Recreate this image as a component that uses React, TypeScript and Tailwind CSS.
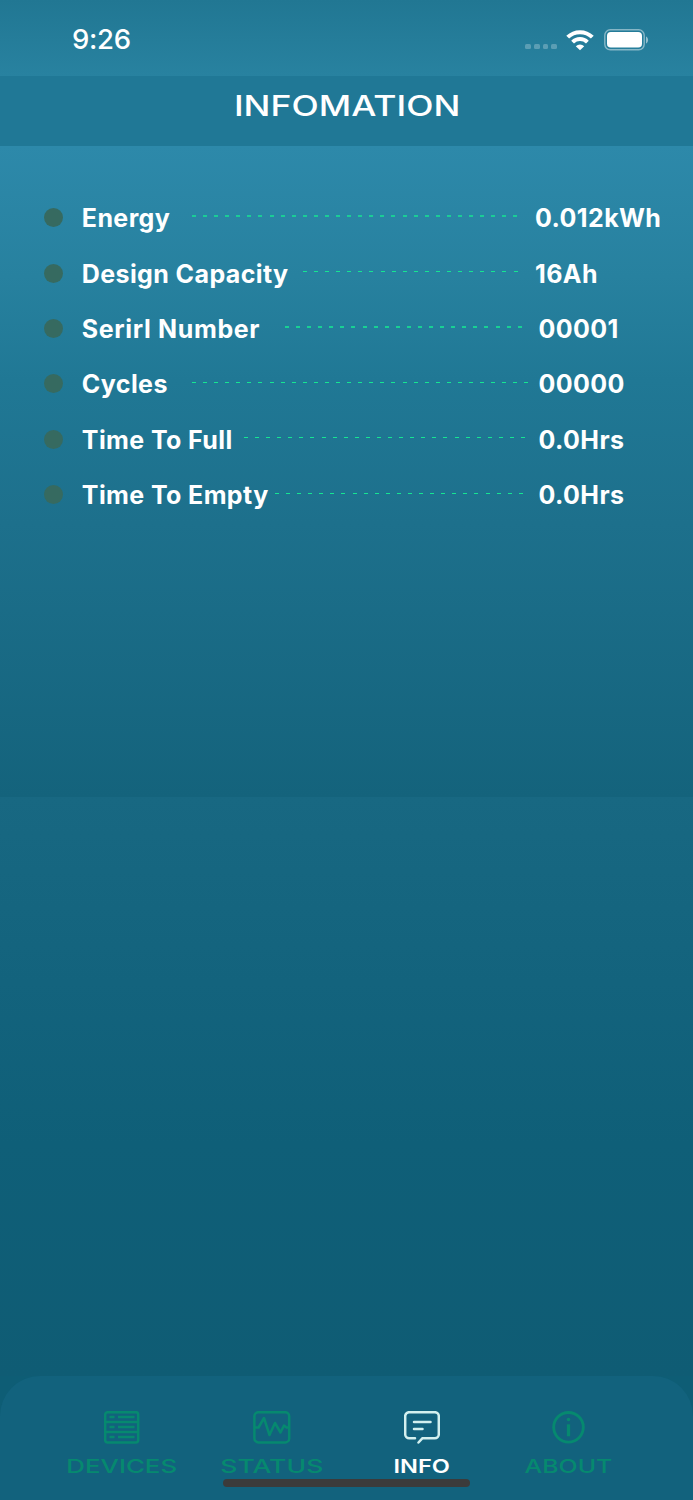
import clsx from 'clsx';
import React from 'react';

interface IRow {
    label: string;
    value: string;
    line: string;
    labelClass?: string;
    valueClass: string;
}

interface ITab {
    label: string;
    icon: React.ReactNode;
    active?: boolean;
    className: string;
    labelClass: string;
}

const ROWS: IRow[] = [
    {
        label: 'Energy',
        value: '0.012kWh',
        line: 'ml-[192px] w-[327px] h-[2px] opacity-75',
        valueClass: 'ml-[16px]',
    },
    {
        label: 'Design Capacity',
        value: '16Ah',
        line: 'ml-[303px] w-[216px] h-px',
        valueClass: 'ml-[16px]',
    },
    {
        label: 'Serirl Number',
        value: '00001',
        line: 'ml-[284.5px] w-[238px] h-[2px] opacity-80',
        labelClass: 'tracking-[0.65px]',
        valueClass: 'ml-[16px]',
    },
    {
        label: 'Cycles',
        value: '00000',
        line: 'ml-[192px] w-[338px] h-px',
        valueClass: 'ml-[8.5px]',
    },
    {
        label: 'Time To Full',
        value: '0.0Hrs',
        line: 'ml-[244px] w-[282px] h-px',
        valueClass: 'ml-[12.5px]',
    },
    {
        label: 'Time To Empty',
        value: '0.0Hrs',
        line: 'ml-[275px] w-[248px] h-px',
        valueClass: 'ml-[15.5px]',
    },
];

const TABS: ITab[] = [
    {
        label: 'DEVICES',
        className: 'w-[112px] ml-[66px]',
        labelClass: 'scale-x-[1.36]',
        icon: (
            <svg width="36" height="33" viewBox="0 0 36 33" fill="none">
                <rect x="1.2" y="1.2" width="33" height="30.2" rx="2.5" />
                <path d="M1 11h33M1 21h33M5.5 6h5M14 6h16.5M5.5 16h5M14 16h16.5M5.5 26h5M14 26h16.5" />
            </svg>
        ),
    },
    {
        label: 'STATUS',
        className: 'w-[104px] ml-[42px]',
        labelClass: 'scale-x-[1.4]',
        icon: (
            <svg width="38" height="33" viewBox="0 0 38 33" fill="none">
                <rect x="1.4" y="1.2" width="34.8" height="30.2" rx="4" />
                <path d="M2 16.5h3.5L11 7l5.5 17L22 12l5.5 9.5L31 14.5l2.5 2H36" />
            </svg>
        ),
    },
    {
        label: 'INFO',
        active: true,
        className: 'w-[60px] ml-[67.5px]',
        labelClass: 'scale-x-[1.24]',
        icon: (
            <svg width="36" height="33" viewBox="0 0 36 33" fill="none" strokeLinecap="round">
                <path d="M11 27.2H5.2a4 4 0 0 1-4-4V5.2a4 4 0 0 1 4-4h25.6a4 4 0 0 1 4 4v18a4 4 0 0 1-4 4H18.5l-4 4.3" />
                <path d="M10 11h16.5M10 18h8.5" />
            </svg>
        ),
    },
    {
        label: 'ABOUT',
        className: 'w-[88px] ml-[72.5px]',
        labelClass: 'scale-x-[1.31]',
        icon: (
            <svg width="33" height="33" viewBox="0 0 33 33" fill="none">
                <circle cx="16.5" cy="16.3" r="14.8" className="stroke-[2.9px]" />
                <path d="M16.5 13.3v12" className="stroke-[3.3px]" />
                <circle cx="16.5" cy="8.5" r="1.8" fill="currentColor" stroke="none" />
            </svg>
        ),
    },
];

const StatusBar = () => {
    return (
        <div className="h-[76px] bg-linear-to-b from-[#217793] to-[#2882a0] flex items-start justify-between pl-[72px] pr-[44px]">
            <span className="mt-[21px] text-[27.5px] leading-9 font-medium tracking-[-0.3px]">
                9:26
            </span>
            <div className="mt-[28px] flex items-center h-[24px]">
                <div className="flex gap-[3px] mr-[9px] mt-[13px]">
                    {[0, 1, 2, 3].map((dot) => (
                        <span
                            key={dot}
                            className="size-[5.7px] rounded-[1.5px] bg-white/25"
                        />
                    ))}
                </div>
                <svg width="28" height="21" viewBox="0 0 28 21" fill="none" stroke="white">
                    <path d="M1.7 7.2a17.5 17.5 0 0 1 24.6 0" strokeWidth="4" />
                    <path d="M6.6 12.1a10.6 10.6 0 0 1 14.8 0" strokeWidth="4" />
                    <path
                        d="M14 20.3l-4.2-4.1a6 6 0 0 1 8.4 0z"
                        fill="white"
                        stroke="none"
                    />
                </svg>
                <svg width="45" height="22" viewBox="0 0 45 22" className="ml-[10px]">
                    <rect
                        x="0.8"
                        y="0.8"
                        width="39.4"
                        height="20"
                        rx="5.5"
                        fill="none"
                        stroke="white"
                        strokeOpacity="0.45"
                        strokeWidth="1.4"
                    />
                    <rect x="3" y="3" width="35" height="15.5" rx="3.8" fill="white" />
                    <path d="M42 7.5c2.8 1.2 2.8 5.8 0 7z" fill="white" fillOpacity="0.5" />
                </svg>
            </div>
        </div>
    );
};

const InfoRow = ({ row }: { row: IRow }) => {
    return (
        <div className="relative h-[55.4px] flex items-center">
            <div className="absolute inset-y-0 left-[44.3px] flex items-center">
                <span className="size-[19px] rounded-full bg-[#366a60]" />
                <span
                    className={clsx('ml-[18.5px] mt-[1px] whitespace-nowrap', row.labelClass)}
                >
                    {row.label}
                </span>
            </div>
            <div
                className={clsx(
                    'shrink-0 -mt-[3px] bg-[repeating-linear-gradient(90deg,#16e592_0_4px,transparent_4px_11.08px)]',
                    row.line,
                )}
            />
            <span className={clsx('mt-[1px] whitespace-nowrap', row.valueClass)}>
                {row.value}
            </span>
        </div>
    );
};

const TabBar = () => {
    return (
        <nav className="h-[124px] bg-[#0e5d75]">
            <div className="h-full rounded-t-[40px] bg-[#12627d] flex flex-col">
                <div className="flex pt-[34.5px] h-[103px]">
                    {TABS.map((tab) => (
                        <div
                            key={tab.label}
                            className={clsx(
                                'shrink-0 flex flex-col items-center stroke-current stroke-[2.5px] [stroke-linejoin:round]',
                                tab.className,
                                tab.active ? 'text-[#d3f0ef]' : 'text-[#06896f]',
                            )}
                        >
                            {tab.icon}
                            <span
                                className={clsx(
                                    'mt-[13.5px] text-[19px] leading-[20px] stroke-none',
                                    tab.labelClass,
                                    tab.active ? 'text-white font-semibold' : 'font-medium',
                                )}
                            >
                                {tab.label}
                            </span>
                        </div>
                    ))}
                </div>
                <div className="w-[247px] h-[8px] rounded-full bg-[#3b3b3b] mx-auto" />
            </div>
        </nav>
    );
};

const App = () => {
    return (
        <div className="w-[693px] h-[1500px] overflow-hidden flex flex-col text-white font-['Inter',sans-serif]">
            <StatusBar />
            <header className="h-[70px] bg-[#207896] flex justify-center">
                <h1 className="mt-[12px] ml-[2px] text-[28px] leading-9 font-medium scale-x-[1.27]">
                    INFOMATION
                </h1>
            </header>
            <main className="flex-1 flex flex-col">
                <section className="h-[651px] pt-[44px] text-[25px] leading-8 font-bold tracking-[0.4px] bg-[linear-gradient(180deg,#2d89aa_0%,#27819f_20%,#207895_36%,#1d708c_58%,#14637c_100%)]">
                    {ROWS.map((row) => (
                        <InfoRow key={row.label} row={row} />
                    ))}
                </section>
                <div className="flex-1 bg-[linear-gradient(180deg,#186882_0%,#13637d_32%,#0f5f78_60%,#0f5c74_100%)]" />
            </main>
            <TabBar />
        </div>
    );
};

export default App;
